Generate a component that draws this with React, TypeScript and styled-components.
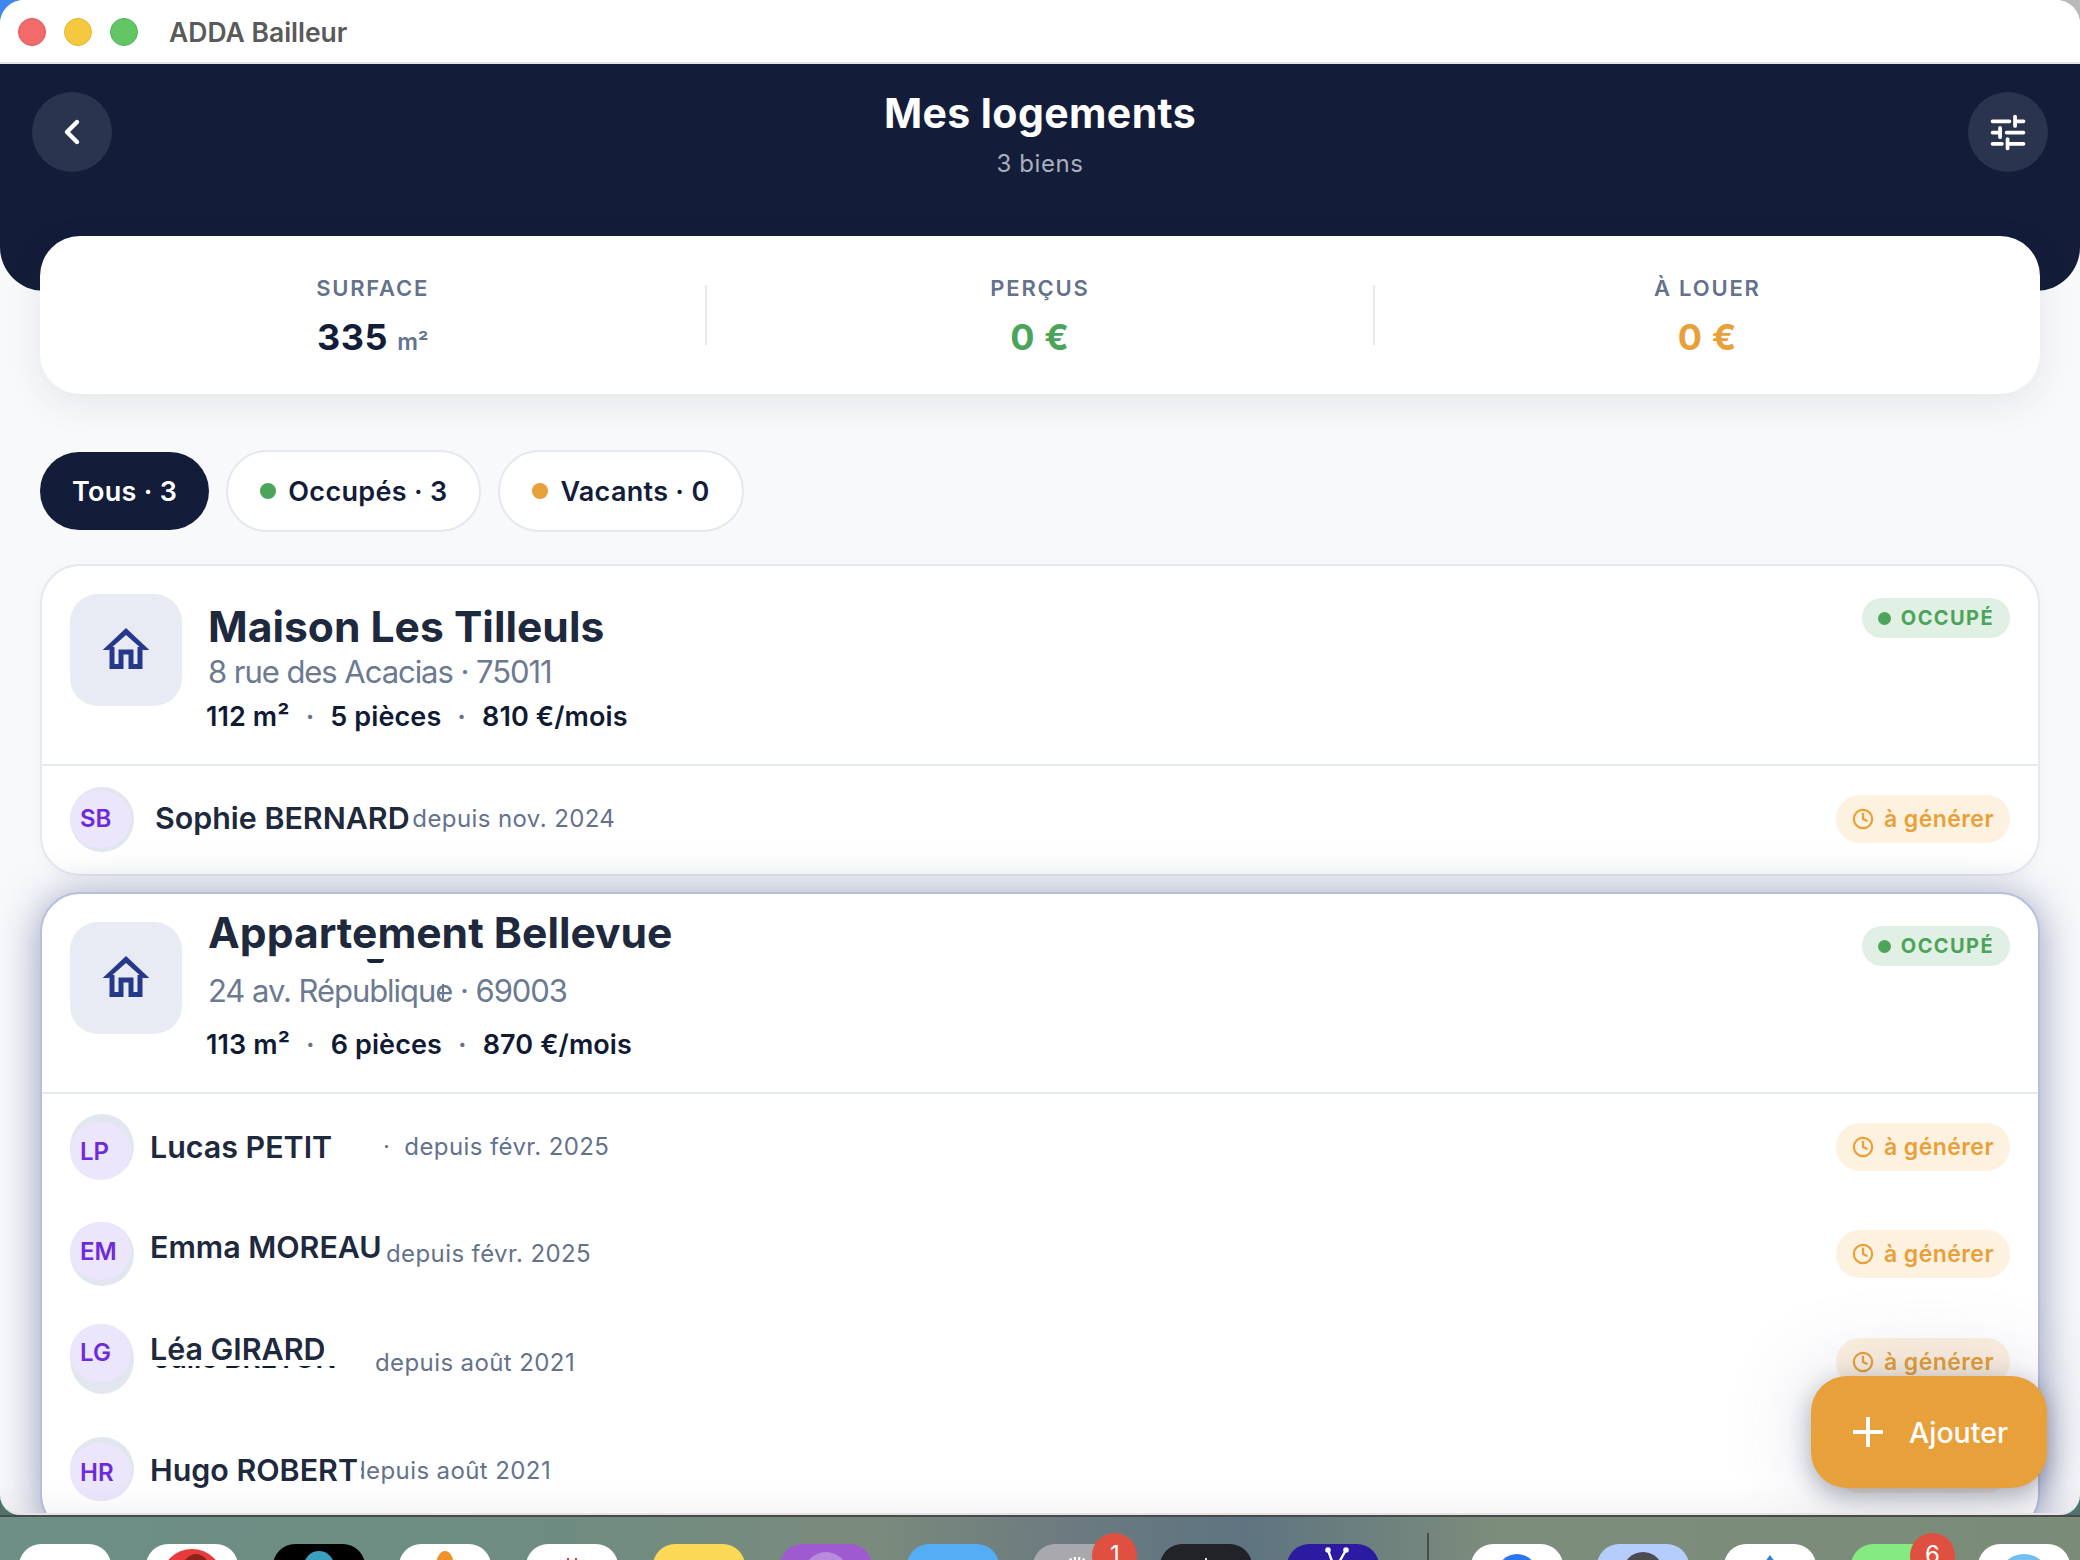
import React from 'react'
import styled, { createGlobalStyle } from 'styled-components'
import { Clock } from 'lucide-react'

const navy = '#131d3a'
const slate = '#64728b'
const ink = '#1e293d'
const green = '#4ca45a'
const orange = '#e8a03a'

const GlobalStyle = createGlobalStyle`
  html, body {
    margin: 0;
    padding: 0;
    background: #6d8c84;
    font-family: Inter, "Noto Sans", sans-serif;
  }
  * {
    box-sizing: border-box;
  }
`

const Screen = styled.div`
  width: 2080px;
  height: 1560px;
  overflow: hidden;
  display: flex;
  flex-direction: column;
  position: relative;
  background:
    linear-gradient(90deg, #3f86ee 50%, #b9b9b9 50%) top / 100% 100px no-repeat,
    #4f736a;
`

const Window = styled.div`
  flex: 0 0 1515px;
  position: relative;
  display: flex;
  flex-direction: column;
  overflow: hidden;
  background: #f8f9fb;
  border-radius: 24px 24px 20px 20px;
  border-bottom: 2px solid #e4e4e4;
  &::after {
    content: '';
    position: absolute;
    left: 0;
    right: 0;
    bottom: 0;
    height: 30px;
    pointer-events: none;
    background: linear-gradient(rgba(0, 0, 0, 0), rgba(0, 0, 0, 0.03));
  }
`

const TitleBar = styled.div`
  flex: 0 0 64px;
  display: flex;
  align-items: center;
  padding: 1px 0 0 18px;
  background: #fff;
  border-bottom: 2px solid #e3e4e6;
`

const Light = styled.span<{ $color: string; $edge: string }>`
  width: 28px;
  height: 28px;
  border-radius: 50%;
  margin-right: 18px;
  background: ${({ $color }) => $color};
  border: 1px solid ${({ $edge }) => $edge};
`

const AppName = styled.div`
  margin-left: 13px;
  font-size: 26.5px;
  font-weight: 600;
  color: #5a5a5a;
`

const Header = styled.header`
  flex: 0 0 227px;
  display: flex;
  align-items: flex-start;
  justify-content: space-between;
  padding: 28px 32px 0;
  background: ${navy};
  border-radius: 0 0 44px 44px;
`

const RoundButton = styled.button`
  width: 80px;
  height: 80px;
  padding: 0;
  display: flex;
  align-items: center;
  justify-content: center;
  border: 0;
  border-radius: 50%;
  background: #2b344f;
`

const HeaderTitles = styled.div`
  margin-top: -3px;
  display: flex;
  flex-direction: column;
  align-items: center;
`

const PageTitle = styled.h1`
  margin: 0;
  font-size: 41px;
  line-height: 48px;
  font-weight: 700;
  color: #fff;
  letter-spacing: 0.4px;
`

const PageSub = styled.div`
  margin-top: 12px;
  font-size: 24px;
  line-height: 30px;
  letter-spacing: 0.6px;
  color: #a9afbd;
`

const Body = styled.main`
  flex: 1;
  display: flex;
  flex-direction: column;
  padding: 0 40px;
  min-height: 0;
`

const StatsCard = styled.section`
  flex: 0 0 158px;
  margin-top: -55px;
  display: flex;
  align-items: center;
  background: #fff;
  border-radius: 40px;
  box-shadow: 0 10px 36px rgba(30, 40, 70, 0.09);
`

const Stat = styled.div`
  flex: 1;
  padding-top: 5px;
  display: flex;
  flex-direction: column;
  align-items: center;
`

const StatDivider = styled.span`
  flex: 0 0 2px;
  height: 60px;
  background: #e5e8ee;
`

const StatLabel = styled.div`
  font-size: 22px;
  line-height: 28px;
  font-weight: 600;
  letter-spacing: 1.8px;
  color: ${slate};
`

const StatValue = styled.div<{ $color: string }>`
  margin-top: 11px;
  font-size: 36px;
  line-height: 48px;
  font-weight: 700;
  letter-spacing: 0.6px;
  color: ${({ $color }) => $color};
`

const StatUnit = styled.span`
  font-size: 23px;
  line-height: 1;
  font-weight: 600;
  letter-spacing: 0;
  color: ${slate};
`

const Chips = styled.div`
  flex: 0 0 82px;
  margin-top: 56px;
  display: flex;
  align-items: center;
  gap: 17px;
`

const Chip = styled.div<{ $active?: boolean }>`
  display: flex;
  align-items: center;
  gap: 12px;
  height: ${({ $active }) => ($active ? '78px' : '82px')};
  padding: 0 32px;
  border-radius: 41px;
  font-size: 27px;
  font-weight: 600;
  letter-spacing: 0.3px;
  color: ${({ $active }) => ($active ? '#fff' : navy)};
  background: ${({ $active }) => ($active ? navy : '#fff')};
  border: ${({ $active }) => ($active ? 'none' : '2px solid #e5e8f0')};
`

const Dot = styled.span<{ $color: string; $size: number }>`
  flex: none;
  width: ${({ $size }) => $size}px;
  height: ${({ $size }) => $size}px;
  border-radius: 50%;
  background: ${({ $color }) => $color};
`

const Cards = styled.div`
  margin-top: 32px;
  display: flex;
  flex-direction: column;
  gap: 16px;
`

const Card = styled.article<{ $focused?: boolean }>`
  position: relative;
  background: #fff;
  border-radius: 40px;
  border: 2px solid ${({ $focused }) => ($focused ? '#b7bfdc' : '#e4e8f0')};
  box-shadow: ${({ $focused }) =>
    $focused ? '0 4px 42px rgba(50, 62, 125, 0.5)' : '0 4px 16px rgba(30, 40, 70, 0.03)'};
  padding-bottom: ${({ $focused }) => ($focused ? '8px' : '0')};
`

const CardHead = styled.div`
  position: relative;
  display: flex;
  align-items: flex-start;
  height: 200px;
  padding: 28px 28px 0 28px;
  border-bottom: 2px solid #e5e9f1;
`

const IconBox = styled.div`
  flex: 0 0 112px;
  height: 112px;
  display: flex;
  align-items: center;
  justify-content: center;
  padding-right: 2px;
  background: #e8ebf3;
  border-radius: 28px;
`

const Info = styled.div`
  flex: 1;
  margin-left: 26px;
  padding-top: 8px;
`

const PropName = styled.h2<{ $dy: number }>`
  margin: 0;
  font-size: 42.6px;
  line-height: 50px;
  font-weight: 700;
  color: ${ink};
  transform: translateY(${({ $dy }) => $dy}px);
`

const Address = styled.div<{ $dy: number }>`
  font-size: 31px;
  line-height: 40px;
  letter-spacing: -1.05px;
  color: #6b7a91;
  transform: translateY(${({ $dy }) => $dy}px);
`

const GhostStroke = styled.span`
  position: relative;
  &::after {
    content: '';
    position: absolute;
    left: 7px;
    top: 12px;
    width: 2px;
    height: 15px;
    background: #6b7a91;
  }
`

const GhostArc = styled.span`
  position: absolute;
  left: 325px;
  top: 65px;
  width: 17px;
  height: 4px;
  border-radius: 0 0 10px 10px;
  background: #1a2238;
`

const Specs = styled.div`
  margin-top: 7px;
  margin-left: -2px;
  display: flex;
  align-items: center;
  font-size: 27px;
  line-height: 36px;
  font-weight: 600;
  letter-spacing: 0.1px;
  color: #111a33;
`

const SpecDot = styled.span`
  margin: 0 16px;
  color: ${slate};
`

const StatusBadge = styled.div`
  flex: none;
  height: 40px;
  margin-top: 4px;
  display: flex;
  align-items: center;
  gap: 10px;
  padding: 0 16px;
  border-radius: 20px;
  background: #e1f0e5;
  color: ${green};
  font-size: 20px;
  font-weight: 700;
  letter-spacing: 1.4px;
`

const TenantRow = styled.div<{ $height: number }>`
  height: ${({ $height }) => $height}px;
  display: flex;
  align-items: center;
  padding: 0 28px 2px;
`

const AvatarDisc = styled.div<{ $dy: number; $h: number }>`
  position: relative;
  flex: 0 0 64px;
  height: ${({ $h }) => $h}px;
  border-radius: 50%;
  background: #e2e6ee;
  transform: translateY(${({ $dy }) => $dy}px);
`

const AvatarFace = styled.div<{ $top: number }>`
  position: absolute;
  left: 0;
  top: ${({ $top }) => $top}px;
  width: 61px;
  height: 58px;
  display: flex;
  align-items: center;
  padding-left: 10px;
  border-radius: 50%;
  background: #ebe6fc;
  font-size: 24px;
  font-weight: 600;
  color: #6d2bd9;
`

const NameBox = styled.div<{ $left: number; $width: number; $dy: number }>`
  position: relative;
  flex: 0 0 ${({ $width }) => $width}px;
  min-width: 0;
  margin-left: ${({ $left }) => $left}px;
  white-space: nowrap;
  transform: translateY(${({ $dy }) => $dy}px);
  z-index: 1;
`

const NameText = styled.span`
  padding-right: 3px;
  background: #fff;
  font-size: 30.4px;
  line-height: 38px;
  font-weight: 600;
  color: ${ink};
`

const GhostLine = styled.span`
  position: absolute;
  left: 4px;
  top: 36px;
  height: 6px;
  width: 190px;
  overflow: hidden;
  font-size: 27.5px;
  line-height: 30px;
  font-weight: 600;
  color: #111a33;
  & > span {
    display: block;
    margin-top: -23px;
  }
`

const Since = styled.span<{ $dy: number; $dot?: boolean }>`
  font-size: 24px;
  line-height: 32px;
  letter-spacing: 0.4px;
  color: ${slate};
  white-space: nowrap;
  &::before {
    content: ${({ $dot }) => ($dot ? "'·'" : 'none')};
    position: relative;
    z-index: 2;
    margin-left: -20px;
    margin-right: 14px;
  }
  transform: translateY(${({ $dy }) => $dy}px);
`

const InvoiceBadge = styled.div`
  margin-left: auto;
  flex: none;
  height: 48px;
  display: flex;
  align-items: center;
  gap: 10px;
  padding: 0 16px;
  border-radius: 24px;
  background: #fdf1df;
  color: ${orange};
  font-size: 23px;
  font-weight: 600;
  letter-spacing: 0.45px;
`

const Fab = styled.button`
  position: absolute;
  right: 33px;
  top: 1376px;
  width: 236px;
  height: 112px;
  display: flex;
  align-items: center;
  gap: 26px;
  padding: 0 0 0 42px;
  border: 0;
  border-radius: 36px;
  background: ${orange};
  color: #fff;
  font-family: inherit;
  font-size: 28.5px;
  font-weight: 500;
  box-shadow:
    0 8px 24px rgba(20, 25, 50, 0.32),
    0 0 90px rgba(60, 70, 120, 0.2);
`

const Dock = styled.footer`
  flex: 1;
  display: flex;
  align-items: flex-start;
  gap: 34.8px;
  padding: 27px 0 0 19px;
  border-top: 2px solid #4a4a4c;
  background:
    linear-gradient(90deg, #6d8f86 0%, #6e8c82 25%, #7a8a7c 42%, #6a7a80 52%, #5e7480 60%, #7c8d7c 72%, #7a8c78 100%);
`

const DockIcon = styled.div<{ $bg: string }>`
  position: relative;
  flex: 0 0 92px;
  height: 92px;
  border-radius: 22px;
  background: ${({ $bg }) => $bg};
  overflow: hidden;
  & > svg {
    display: block;
  }
`

const DockSlot = styled.div`
  position: relative;
  flex: 0 0 92px;
`

const DockBadge = styled.span`
  position: absolute;
  right: -12px;
  top: -11px;
  width: 45px;
  height: 45px;
  display: flex;
  justify-content: center;
  padding-top: 7px;
  border-radius: 50%;
  background: #e05040;
  color: #fff;
  font-size: 24px;
  line-height: 30px;
`

const DockDivider = styled.span`
  flex: 0 0 2px;
  height: 40px;
  margin: -11px 7px 0 13px;
  background: #454f48;
`

function HouseIcon() {
  return (
    <svg width="70" height="60" viewBox="0 0 70 60" fill="none">
      <path d="M36 8 L12.7 30 H19 L36 15 L53 30 H59.3 Z" fill="#26388a" />
      <path
        d="M22 27 V46.5 H31 V32 H41 V46.5 H50 V27"
        stroke="#26388a"
        strokeWidth="5"
      />
    </svg>
  )
}

function ChevronIcon() {
  return (
    <svg width="30" height="30" viewBox="0 0 30 30" fill="none">
      <path d="M20 5 L10 15 L20 25" stroke="#fff" strokeWidth="4.4" strokeLinecap="round" strokeLinejoin="round" />
    </svg>
  )
}

function TuneIcon() {
  return (
    <svg width="45" height="45" viewBox="0 0 24 24" fill="none" stroke="#fff" strokeWidth="2" strokeLinecap="round">
      <path d="M3.5 6 H12.5 M15.5 3.5 V8.5 M15.5 6 H20 M3.5 12 H7.5 M7.5 9.5 V14.5 M11 12 H20 M3.5 18 H8.5 M11.5 15.5 V20.5 M11.5 18 H20" />
    </svg>
  )
}

function PlusIcon() {
  return (
    <svg width="30" height="30" viewBox="0 0 30 30" fill="none" stroke="#fff" strokeWidth="4">
      <path d="M15 0 V30 M0 15 H30" />
    </svg>
  )
}

type Tenant = {
  initials: string
  name: string
  since: string
  left: number
  width: number
  rowHeight: number
  nameDy: number
  sinceDy: number
  discDy: number
  discH: number
  faceTop: number
  dot?: boolean
  ghost?: string
}

type Property = {
  name: string
  address: React.ReactNode
  area: string
  rooms: string
  rent: string
  nameDy: number
  addressDy: number
  focused?: boolean
  tenants: Tenant[]
}

const properties: Property[] = [
  {
    name: 'Maison Les Tilleuls',
    address: '8 rue des Acacias · 75011',
    area: '112 m²',
    rooms: '5 pièces',
    rent: '810 €/mois',
    nameDy: 0,
    addressDy: 0,
    tenants: [
      {
        initials: 'SB',
        name: 'Sophie BERNARD',
        since: 'depuis nov. 2024',
        left: 21,
        width: 256,
        rowHeight: 108,
        nameDy: -1,
        sinceDy: 0,
        discDy: 0,
        discH: 65,
        faceTop: 3,
        dot: true,
      },
    ],
  },
  {
    name: 'Appartement Bellevue',
    address: (
      <>
        24 av. Républiqu<GhostStroke>e</GhostStroke> · 69003
      </>
    ),
    area: '113 m²',
    rooms: '6 pièces',
    rent: '870 €/mois',
    nameDy: -22,
    addressDy: -9,
    focused: true,
    tenants: [
      {
        initials: 'LP',
        name: 'Lucas PETIT',
        since: 'depuis févr. 2025',
        left: 16,
        width: 253,
        rowHeight: 107,
        nameDy: 0,
        sinceDy: 0,
        discDy: 0,
        discH: 65,
        faceTop: 8,
        dot: true,
      },
      {
        initials: 'EM',
        name: 'Emma MOREAU',
        since: 'depuis févr. 2025',
        left: 16,
        width: 236,
        rowHeight: 108,
        nameDy: -7,
        sinceDy: 0,
        discDy: 0,
        discH: 64,
        faceTop: 0,
      },
      {
        initials: 'LG',
        name: 'Léa GIRARD',
        since: 'depuis août 2021',
        left: 16,
        width: 225,
        rowHeight: 107,
        nameDy: -13,
        sinceDy: 1,
        discDy: -3,
        discH: 70,
        faceTop: 0,
        ghost: 'Julie BRETON',
      },
      {
        initials: 'HR',
        name: 'Hugo ROBERT',
        since: 'depuis août 2021',
        left: 16,
        width: 201,
        rowHeight: 108,
        nameDy: 1,
        sinceDy: 2,
        discDy: 0,
        discH: 64,
        faceTop: 6,
      },
    ],
  },
]

type DockEntry = { bg: string; badge?: string; art?: React.ReactNode }

const dockLeft: DockEntry[] = [
  { bg: '#fff' },
  {
    bg: '#fff',
    art: (
      <>
        <circle cx="46" cy="36" r="31" fill="#e83c3c" />
        <ellipse cx="50" cy="36" rx="17" ry="26" fill="#8c2218" />
      </>
    ),
  },
  { bg: '#000', art: <circle cx="46" cy="22" r="15" fill="#3aa0c0" /> },
  { bg: '#fff', art: <ellipse cx="46" cy="22" rx="9" ry="15" fill="#f0912a" /> },
  {
    bg: '#fff',
    art: (
      <>
        <rect x="41" y="14" width="2" height="6" fill="#e03a30" />
        <rect x="49" y="14" width="2" height="6" fill="#e03a30" />
      </>
    ),
  },
  { bg: '#fbd856' },
  { bg: '#9e5bd0', art: <circle cx="46" cy="30" r="22" fill="#b88cdc" /> },
  { bg: '#55aef5' },
  {
    bg: '#a9a8ad',
    badge: '1',
    art: <circle cx="44" cy="32" r="16" fill="#fff" stroke="#fff" strokeWidth="6" strokeDasharray="2 2" />,
  },
  { bg: '#222327', art: <rect x="45" y="14" width="2" height="6" fill="#e8e8e8" /> },
  {
    bg: '#2a1ba0',
    art: (
      <g stroke="#fff" strokeWidth="2.4">
        <path d="M41 6 L46 20 M59 6 L51 20" />
        <circle cx="41" cy="6" r="1.6" fill="#fff" />
        <circle cx="59" cy="6" r="1.6" fill="#fff" />
      </g>
    ),
  },
]

const dockRight: DockEntry[] = [
  { bg: '#fff', art: <circle cx="46" cy="30" r="20" fill="#2b74f0" /> },
  {
    bg: '#b4cdfa',
    art: (
      <>
        <circle cx="46" cy="28" r="20" fill="#4c4c50" />
        <circle cx="46" cy="30" r="12" fill="#8a8a8e" />
      </>
    ),
  },
  { bg: '#fff', art: <path d="M46 11 L54 22 H38 Z" fill="#2b7fe0" /> },
  { bg: '#85ea82', badge: '6' },
  { bg: '#fff', art: <circle cx="46" cy="36" r="26" fill="#74bdf2" /> },
]

function DockItem({ entry }: { entry: DockEntry }) {
  return (
    <DockSlot>
      <DockIcon $bg={entry.bg}>
        {entry.art && (
          <svg width="92" height="92" viewBox="0 0 92 92">
            {entry.art}
          </svg>
        )}
      </DockIcon>
      {entry.badge && <DockBadge>{entry.badge}</DockBadge>}
    </DockSlot>
  )
}

function TenantLine({ tenant }: { tenant: Tenant }) {
  return (
    <TenantRow $height={tenant.rowHeight}>
      <AvatarDisc $dy={tenant.discDy} $h={tenant.discH}>
        <AvatarFace $top={tenant.faceTop}>{tenant.initials}</AvatarFace>
      </AvatarDisc>
      <NameBox $left={tenant.left} $width={tenant.width} $dy={tenant.nameDy}>
        <NameText>{tenant.name}</NameText>
        {tenant.ghost && (
          <GhostLine>
            <span>{tenant.ghost}</span>
          </GhostLine>
        )}
      </NameBox>
      <Since $dy={tenant.sinceDy} $dot={tenant.dot}>
        {tenant.since}
      </Since>
      <InvoiceBadge>
        <Clock size={22} strokeWidth={2.4} />à générer
      </InvoiceBadge>
    </TenantRow>
  )
}

function PropertyCard({ property }: { property: Property }) {
  return (
    <Card $focused={property.focused}>
      <CardHead>
        <IconBox>
          <HouseIcon />
        </IconBox>
        <Info>
          <PropName $dy={property.nameDy}>{property.name}</PropName>
          <Address $dy={property.addressDy}>{property.address}</Address>
          <Specs>
            {property.area}
            <SpecDot>·</SpecDot>
            {property.rooms}
            <SpecDot>·</SpecDot>
            {property.rent}
          </Specs>
        </Info>
        {property.focused && <GhostArc />}
        <StatusBadge>
          <Dot $color={green} $size={13} />
          OCCUPÉ
        </StatusBadge>
      </CardHead>
      {property.tenants.map((tenant) => (
        <TenantLine key={tenant.initials} tenant={tenant} />
      ))}
    </Card>
  )
}

export default function App() {
  return (
    <Screen>
      <GlobalStyle />
      <Window>
        <TitleBar>
          <Light $color="#f36b6b" $edge="#e25252" />
          <Light $color="#f5c93f" $edge="#e4b52e" />
          <Light $color="#62c566" $edge="#4fb454" />
          <AppName>ADDA Bailleur</AppName>
        </TitleBar>
        <Header>
          <RoundButton aria-label="Retour">
            <ChevronIcon />
          </RoundButton>
          <HeaderTitles>
            <PageTitle>Mes logements</PageTitle>
            <PageSub>3 biens</PageSub>
          </HeaderTitles>
          <RoundButton aria-label="Filtres">
            <TuneIcon />
          </RoundButton>
        </Header>
        <Body>
          <StatsCard>
            <Stat>
              <StatLabel>SURFACE</StatLabel>
              <StatValue $color="#131d3a">
                335 <StatUnit>m²</StatUnit>
              </StatValue>
            </Stat>
            <StatDivider />
            <Stat>
              <StatLabel>PERÇUS</StatLabel>
              <StatValue $color={green}>0 €</StatValue>
            </Stat>
            <StatDivider />
            <Stat>
              <StatLabel>À LOUER</StatLabel>
              <StatValue $color={orange}>0 €</StatValue>
            </Stat>
          </StatsCard>
          <Chips>
            <Chip $active>Tous · 3</Chip>
            <Chip>
              <Dot $color={green} $size={16} />
              Occupés · 3
            </Chip>
            <Chip>
              <Dot $color={orange} $size={16} />
              Vacants · 0
            </Chip>
          </Chips>
          <Cards>
            {properties.map((property) => (
              <PropertyCard key={property.name} property={property} />
            ))}
          </Cards>
        </Body>
        <Fab>
          <PlusIcon />
          Ajouter
        </Fab>
      </Window>
      <Dock>
        {dockLeft.map((entry, i) => (
          <DockItem key={i} entry={entry} />
        ))}
        <DockDivider />
        {dockRight.map((entry, i) => (
          <DockItem key={i} entry={entry} />
        ))}
      </Dock>
    </Screen>
  )
}
